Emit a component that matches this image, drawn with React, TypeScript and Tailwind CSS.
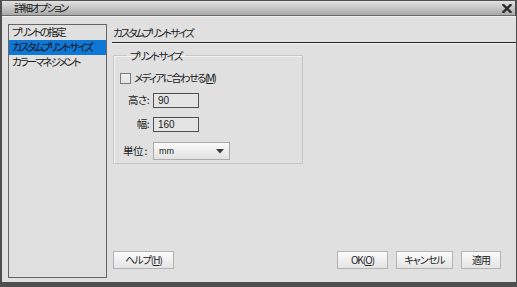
const jp = "font-['MS_UI_Gothic','Noto_Sans_CJK_JP',sans-serif] [font-feature-settings:'palt']";

const navItems = ['プリントの指定', 'カスタムプリントサイズ', 'カラーマネジメント'];

function Button({ children, width }: { children: React.ReactNode; width: string }) {
  return (
    <button
      className={`${width} h-[18px] flex items-center justify-center border border-[#b4b4b4] bg-gradient-to-b from-[#fbfbfb] to-[#e4e4e4] text-[10px] leading-none text-[#222] tracking-[-1px] whitespace-nowrap`}
    >
      {children}
    </button>
  );
}

export default function App() {
  return (
    <div className={`w-[517px] h-[287px] bg-[#4f4f4f] flex flex-col ${jp} text-[#1a1a1a]`}>
      {/* Title bar */}
      <div className="h-[15px] mt-[1px] mx-[2px] flex items-center justify-between bg-gradient-to-b from-[#e2e2e2] to-[#a9a9a9] border-b border-[#6a6a6a]">
        <span className="ml-[12px] text-[10.5px] leading-none tracking-[-2px] text-[#222]">詳細オプション</span>
        <svg width="10" height="9" viewBox="0 0 10 9" className="mr-[3px]">
          <path d="M1.5 1 L8.5 8 M8.5 1 L1.5 8" stroke="#2b2b2b" strokeWidth="2.4" strokeLinecap="square" />
        </svg>
      </div>

      {/* Body */}
      <div className="flex-1 ml-[2px] mr-[1px] mb-[5px] bg-[#e0e0e0] border-t border-[#f2f2f2] flex pt-[7px] pb-[4px]">
        {/* Sidebar */}
        <div className="ml-[6px] w-[99px] border border-[#646464] bg-[#e0e0e0] flex flex-col">
          {navItems.map((item, i) => (
            <div
              key={item}
              className={`h-[15px] pl-[3px] flex items-center whitespace-nowrap text-[10.5px] leading-none tracking-[-2px] ${
                i === 1 ? 'bg-[#0f78d6] text-[#111]' : ''
              }`}
            >
              {item}
            </div>
          ))}
        </div>

        {/* Right pane */}
        <div className="ml-[5px] flex-1 flex flex-col">
          <div className="h-[18px] pl-[1px] flex items-center whitespace-nowrap text-[10.5px] leading-none tracking-[-2px]">カスタムプリントサイズ</div>
          <div className="h-[2px] bg-[#262626] border-b border-[#f0f0f0]" />

          <fieldset className="mt-[5px] ml-[1px] w-[190px] border border-[#c6c6c6] shadow-[inset_1px_1px_0_#f4f4f4] px-0 pb-[3px]">
            <legend className="ml-[13px] px-[3px] text-[10.5px] leading-[13px] tracking-[-1.8px]">プリントサイズ</legend>
            <div className="flex flex-col pl-[6px]">
              <label className="mt-[10px] h-[13px] flex items-center gap-[3px] whitespace-nowrap text-[10.5px] leading-none tracking-[-1.8px]">
                <span className="w-[11px] h-[11px] border border-[#7a7a7a] bg-gradient-to-b from-[#f0f0f0] to-[#e4e4e4]" />
                <span>メディアに合わせる(<span className="underline">M</span>)</span>
              </label>

              <div className="mt-[8px] flex items-center">
                <span className="w-[29px] text-right text-[10.5px] leading-none tracking-[-0.6px]">高さ:</span>
                <div className="ml-[4px] w-[46px] h-[15px] border border-[#505050] bg-[#e4e4e4] pl-[4px] flex items-center font-['Liberation_Sans',sans-serif] text-[10px] leading-none">90</div>
              </div>

              <div className="mt-[9px] flex items-center">
                <span className="w-[29px] text-right text-[10.5px] leading-none tracking-[-0.6px]">幅:</span>
                <div className="ml-[4px] w-[46px] h-[15px] border border-[#505050] bg-[#e4e4e4] pl-[4px] flex items-center font-['Liberation_Sans',sans-serif] text-[10px] leading-none">160</div>
              </div>

              <div className="mt-[10px] flex items-center">
                <span className="w-[29px] pl-[3px] text-[10.5px] leading-none tracking-[-0.6px] whitespace-nowrap">単位 :</span>
                <div className="ml-[4px] w-[77px] h-[18px] border border-[#ababab] bg-gradient-to-b from-[#fafafa] to-[#e2e2e2] pl-[5px] pr-[5px] flex items-center justify-between">
                  <span className="font-['Liberation_Sans',sans-serif] text-[9px] leading-none">mm</span>
                  <svg width="8" height="5" viewBox="0 0 8 5">
                    <path d="M0 0 H8 L4 4.5 Z" fill="#3a3a3a" />
                  </svg>
                </div>
              </div>
            </div>
          </fieldset>

          <div className="mt-auto mb-[9px] flex items-center pr-[15px]">
            <div className="ml-[1px]">
              <Button width="w-[61px]">ヘルプ(<span className="underline">H</span>)</Button>
            </div>
            <div className="ml-auto flex gap-[8px]">
              <Button width="w-[51px]">OK(<span className="underline">O</span>)</Button>
              <Button width="w-[57px]">キャンセル</Button>
              <Button width="w-[40px]">適用</Button>
            </div>
          </div>
        </div>
      </div>
    </div>
  );
}
